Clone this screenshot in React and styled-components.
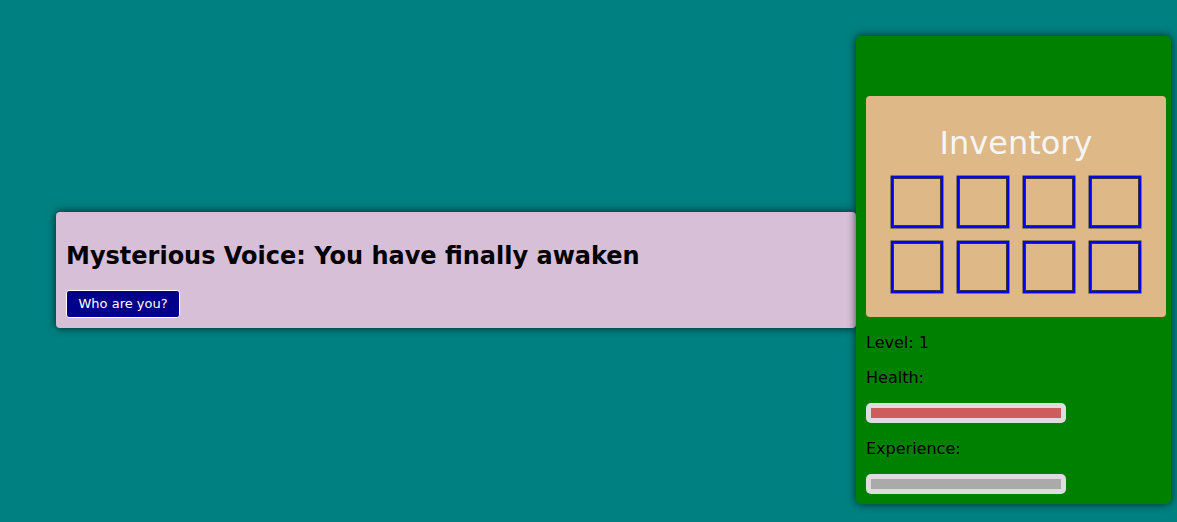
import React from 'react'
import styled, { createGlobalStyle } from 'styled-components'

const GlobalStyle = createGlobalStyle`
    html, body {
        margin: 0;
        padding: 0;
        background: #008080;
        font-family: "DejaVu Sans", Verdana, sans-serif;
    }
`

const Page = styled.div`
    display: flex;
    align-items: center;
    height: 522px;
    box-sizing: border-box;
    padding: 36px 6px 19px 56px;
`

const Dialog = styled.div`
    flex: 1;
    background: #d8bfd8;
    border-radius: 4px;
    padding: 10px;
    box-shadow: 0 0 8px rgba(0, 0, 0, 0.75);
    h2 {
        margin: 20px 0;
        font-size: 24px;
        font-weight: bold;
        color: #000;
    }
`

const Choice = styled.button`
    background: #00008b;
    color: #fff;
    border: 1px solid #fff;
    border-radius: 3px;
    padding: 5px 11.5px;
    font-family: inherit;
    font-size: 13px;
    line-height: 16px;
    cursor: pointer;
`

const Sidebar = styled.div`
    width: 315px;
    box-sizing: border-box;
    background: #008000;
    border-radius: 5px;
    padding: 60px 5px 10px 10px;
    box-shadow: 0 0 8px rgba(0, 0, 0, 0.7);
    p {
        margin: 16px 0;
        font-size: 16px;
        color: #000;
    }
`

const Inventory = styled.div`
    width: 300px;
    background: #deb887;
    border-radius: 4px;
    padding: 28px 0 24px;
    h3 {
        margin: 0 0 14px;
        text-align: center;
        font-size: 32px;
        font-weight: normal;
        color: #f5f5f5;
    }
`

const Slots = styled.div`
    display: grid;
    grid-template-columns: repeat(4, 52px);
    gap: 13px 14px;
    justify-content: center;
    padding-right: 1px;
`

const Slot = styled.div`
    width: 52px;
    height: 52px;
    box-sizing: border-box;
    border: 2px solid #0000ff;
    box-shadow: 0 0 0 1px #333 inset, 0 0 0 0.5px #333;
`

const Bar = styled.div`
    width: 200px;
    height: 20px;
    box-sizing: border-box;
    background: #ddd;
    border-radius: 5px;
    padding: 5px;
    margin: ${({last}) => last ? '0' : '0 0 16px'};
`

const Fill = styled.div`
    height: 100%;
    background: ${({color}) => color};
`

const App = () => {
    const slots = Array.from({ length: 8 })

    return (
        <>
            <GlobalStyle />
            <Page>
                <Dialog>
                    <h2>Mysterious Voice: You have finally awaken</h2>
                    <Choice>Who are you?</Choice>
                </Dialog>
                <Sidebar>
                    <Inventory>
                        <h3>Inventory</h3>
                        <Slots>
                            {slots.map((_, idx) => <Slot key={idx} />)}
                        </Slots>
                    </Inventory>
                    <p>Level: 1</p>
                    <p>Health:</p>
                    <Bar>
                        <Fill color="#cd5c5c" style={{ width: '100%' }} />
                    </Bar>
                    <p>Experience:</p>
                    <Bar last>
                        <Fill color="#aaa" style={{ width: '100%' }} />
                    </Bar>
                </Sidebar>
            </Page>
        </>
    )
}

export default App
